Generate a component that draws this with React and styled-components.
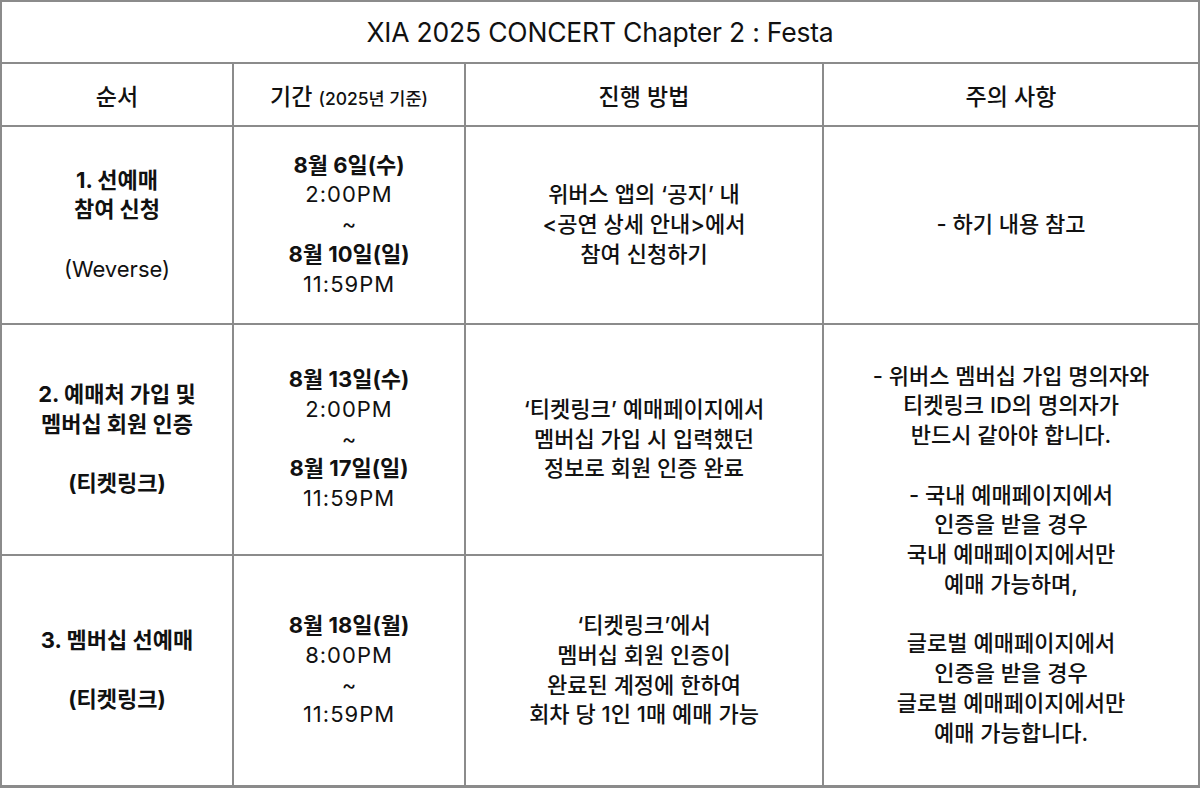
import React from "react";
import styled, { createGlobalStyle } from "styled-components";

const Global = createGlobalStyle`
  html, body { margin: 0; padding: 0; background: #fff; }
  body { font-family: Inter, "Noto Sans CJK KR", sans-serif; color: #111; }
`;

const Table = styled.div`
  width: 1200px;
  height: 788px;
  box-sizing: border-box;
  display: grid;
  grid-template-columns: 230px 230px 356px 1fr;
  grid-template-rows: 60px 61px 196px 229px 229px;
  gap: 2px;
  padding: 2px;
  background: #8b8b8b;
`;

const Cell = styled.div`
  background: #fff;
  display: flex;
  flex-direction: column;
  align-items: center;
  justify-content: center;
  text-align: center;
  grid-column: ${(p) => p.$col || "auto"};
  grid-row: ${(p) => p.$row || "auto"};
`;

const Title = styled.div`
  font-size: 26.5px;
  font-weight: 400;
  letter-spacing: -0.2px;
  color: #111;
`;

const Head = styled.div`
  font-size: 23px;
  font-weight: 500;
  color: #111;
`;

const HeadSmall = styled.span`
  font-size: 17.5px;
  font-weight: 500;
`;

const Line = styled.div`
  font-size: 22px;
  line-height: 29.75px;
  height: 29.75px;
  font-weight: ${(p) => p.$w || 500};
  letter-spacing: ${(p) => p.$ls || "0px"};
  white-space: nowrap;
  color: #111;
`;

const Blank = styled.div`
  height: 29.75px;
`;

const Lines = ({ items }) =>
  items.map((it, i) =>
    it === null ? (
      <Blank key={i} />
    ) : (
      <Line key={i} $w={it.w} $ls={it.ls}>
        {it.t}
      </Line>
    )
  );

const B = (t) => ({ t, w: 700 });
const R = (t) => ({ t, w: 400 });
const T = (t) => ({ t, w: 400, ls: "1px" });
const M = (t) => ({ t, w: 500 });

export default function App() {
  return (
    <>
      <Global />
      <Table>
        <Cell $col="1 / 5">
          <Title>XIA 2025 CONCERT Chapter 2 : Festa</Title>
        </Cell>
        <Cell>
          <Head>순서</Head>
        </Cell>
        <Cell>
          <Head>
            기간 <HeadSmall>(2025년 기준)</HeadSmall>
          </Head>
        </Cell>
        <Cell>
          <Head>진행 방법</Head>
        </Cell>
        <Cell>
          <Head>주의 사항</Head>
        </Cell>

        <Cell>
          <Lines items={[B("1. 선예매"), B("참여 신청"), null, R("(Weverse)")]} />
        </Cell>
        <Cell>
          <Lines
            items={[B("8월 6일(수)"), T("2:00PM"), R("~"), B("8월 10일(일)"), T("11:59PM")]}
          />
        </Cell>
        <Cell>
          <Lines
            items={[M("위버스 앱의 ‘공지’ 내"), M("<공연 상세 안내>에서"), M("참여 신청하기")]}
          />
        </Cell>
        <Cell>
          <Lines items={[M("- 하기 내용 참고")]} />
        </Cell>

        <Cell>
          <Lines
            items={[B("2. 예매처 가입 및"), B("멤버십 회원 인증"), null, B("(티켓링크)")]}
          />
        </Cell>
        <Cell>
          <Lines
            items={[B("8월 13일(수)"), T("2:00PM"), R("~"), B("8월 17일(일)"), T("11:59PM")]}
          />
        </Cell>
        <Cell>
          <Lines
            items={[
              M("‘티켓링크’ 예매페이지에서"),
              M("멤버십 가입 시 입력했던"),
              M("정보로 회원 인증 완료"),
            ]}
          />
        </Cell>
        <Cell $row="4 / 6" $col="4">
          <Lines
            items={[
              M("- 위버스 멤버십 가입 명의자와"),
              M("티켓링크 ID의 명의자가"),
              M("반드시 같아야 합니다."),
              null,
              M("- 국내 예매페이지에서"),
              M("인증을 받을 경우"),
              M("국내 예매페이지에서만"),
              M("예매 가능하며,"),
              null,
              M("글로벌 예매페이지에서"),
              M("인증을 받을 경우"),
              M("글로벌 예매페이지에서만"),
              M("예매 가능합니다."),
            ]}
          />
        </Cell>

        <Cell $col="1" $row="5">
          <Lines items={[B("3. 멤버십 선예매"), null, B("(티켓링크)")]} />
        </Cell>
        <Cell $col="2" $row="5">
          <Lines items={[B("8월 18일(월)"), T("8:00PM"), R("~"), T("11:59PM")]} />
        </Cell>
        <Cell $col="3" $row="5">
          <Lines
            items={[
              M("‘티켓링크’에서"),
              M("멤버십 회원 인증이"),
              M("완료된 계정에 한하여"),
              M("회차 당 1인 1매 예매 가능"),
            ]}
          />
        </Cell>
      </Table>
    </>
  );
}
